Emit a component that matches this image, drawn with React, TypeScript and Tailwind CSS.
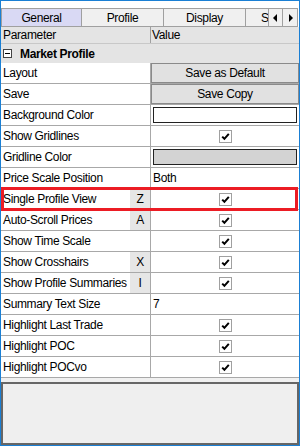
import React from "react";

type Row = {
  label: string;
  key?: string;
  kind: "button" | "swatch" | "check" | "text";
  value?: string;
  fill?: string;
};

const rows: Row[] = [
  { label: "Layout", kind: "button", value: "Save as Default" },
  { label: "Save", kind: "button", value: "Save Copy" },
  { label: "Background Color", kind: "swatch", fill: "bg-white" },
  { label: "Show Gridlines", kind: "check" },
  { label: "Gridline Color", kind: "swatch", fill: "bg-[#d3d3d3]" },
  { label: "Price Scale Position", kind: "text", value: "Both" },
  { label: "Single Profile View", key: "Z", kind: "check" },
  { label: "Auto-Scroll Prices", key: "A", kind: "check" },
  { label: "Show Time Scale", kind: "check" },
  { label: "Show Crosshairs", key: "X", kind: "check" },
  { label: "Show Profile Summaries", key: "I", kind: "check" },
  { label: "Summary Text Size", kind: "text", value: "7" },
  { label: "Highlight Last Trade", kind: "check" },
  { label: "Highlight POC", kind: "check" },
  { label: "Highlight POCvo", kind: "check" },
];

const Checkbox = () => (
  <div className="flex h-[13px] w-[13px] items-center justify-center border border-[#a0a0a0] bg-white">
    <svg width="9" height="9" viewBox="0 0 9 9">
      <path d="M1.2 4.6 L3.4 6.8 L7.8 1.8" fill="none" stroke="#000" strokeWidth="2" />
    </svg>
  </div>
);

const ValueCell = ({ row }: { row: Row }) => {
  if (row.kind === "button") {
    return (
      <div className="flex h-full w-full items-center justify-center border border-[#8a8a8a] bg-[#e1e1e1]">
        {row.value}
      </div>
    );
  }
  if (row.kind === "swatch") {
    return (
      <div className="flex h-full items-center px-[2px]">
        <div className={`h-[16px] w-full border border-[#222] ${row.fill}`} />
      </div>
    );
  }
  if (row.kind === "check") {
    return (
      <div className="flex h-full items-center justify-center">
        <Checkbox />
      </div>
    );
  }
  return <div className="flex h-full items-center pl-[2px]">{row.value}</div>;
};

export default function App() {
  return (
    <div
      className="relative flex h-[446px] w-[300px] flex-col border border-[#1a7fd4] bg-white text-[12px] tracking-[-0.35px] text-black"
      style={{ fontFamily: '"Liberation Sans", Arial, sans-serif' }}
    >
      {/* Tabs */}
      <div className="mt-[7px] flex h-[19px] shrink-0">
        <div className="flex w-[81px] items-center justify-center border border-[#a0a0a0] bg-[#d9d9f4]">
          General
        </div>
        <div className="flex w-[82px] items-center justify-center border-y border-r border-[#a0a0a0] bg-[#f0f0f0]">
          Profile
        </div>
        <div className="flex w-[82px] items-center justify-center border-y border-r border-[#a0a0a0] bg-[#f0f0f0]">
          Display
        </div>
        <div className="flex w-[22px] items-center overflow-hidden border-y border-[#a0a0a0] bg-[#f0f0f0] pl-[15px]">
          S
        </div>
        <div className="flex w-[15px] items-center justify-center border border-[#a0a0a0] bg-[#f0f0f0]">
          <svg width="5" height="8" viewBox="0 0 5 8">
            <path d="M4 0 L0 4 L4 8 Z" fill="#000" />
          </svg>
        </div>
        <div className="flex w-[15px] items-center justify-center border-y border-r border-[#a0a0a0] bg-[#f0f0f0]">
          <svg width="5" height="8" viewBox="0 0 5 8">
            <path d="M1 0 L5 4 L1 8 Z" fill="#000" />
          </svg>
        </div>
      </div>

      {/* Header */}
      <div className="flex h-[17px] shrink-0 border-b border-[#c8c8c8] bg-[#e4e4e4]">
        <div className="flex w-[150px] items-center border-r border-[#a0a0a0] pl-[2px]">Parameter</div>
        <div className="flex flex-1 items-center pl-[1px]">Value</div>
      </div>

      {/* Category */}
      <div className="flex h-[19px] shrink-0 items-center bg-[#e4e4e4]">
        <div className="ml-[2px] flex h-[9px] w-[9px] items-center justify-center border border-[#444] bg-white">
          <div className="h-[1px] w-[5px] bg-black" />
        </div>
        <span className="ml-[8px] font-bold">Market Profile</span>
      </div>

      {/* Rows */}
      <div className="flex shrink-0 flex-col">
        {rows.map((row) => (
          <div key={row.label} className="flex h-[21px] border-b border-[#a8a8a8]">
            <div className="flex w-[150px] items-center border-r border-[#a8a8a8]">
              <span className="min-w-0 flex-1 whitespace-nowrap pl-[2px]">{row.label}</span>
              {row.key && (
                <span className="flex h-full w-[20px] shrink-0 items-center justify-center bg-[#e6e6e6]">
                  {row.key}
                </span>
              )}
            </div>
            <div className="flex-1">
              <ValueCell row={row} />
            </div>
          </div>
        ))}
      </div>

      {/* Description */}
      <div className="flex flex-1 flex-col bg-[#f0f0f0] pt-[4px]">
        <div className="flex-1 border-2 border-[#666] bg-[#efefef]" />
      </div>

      {/* Highlight overlay */}
      <div className="absolute left-0 top-[186px] h-[24px] w-[297px] border-[3px] border-[#ec1c24]" />
    </div>
  );
}
